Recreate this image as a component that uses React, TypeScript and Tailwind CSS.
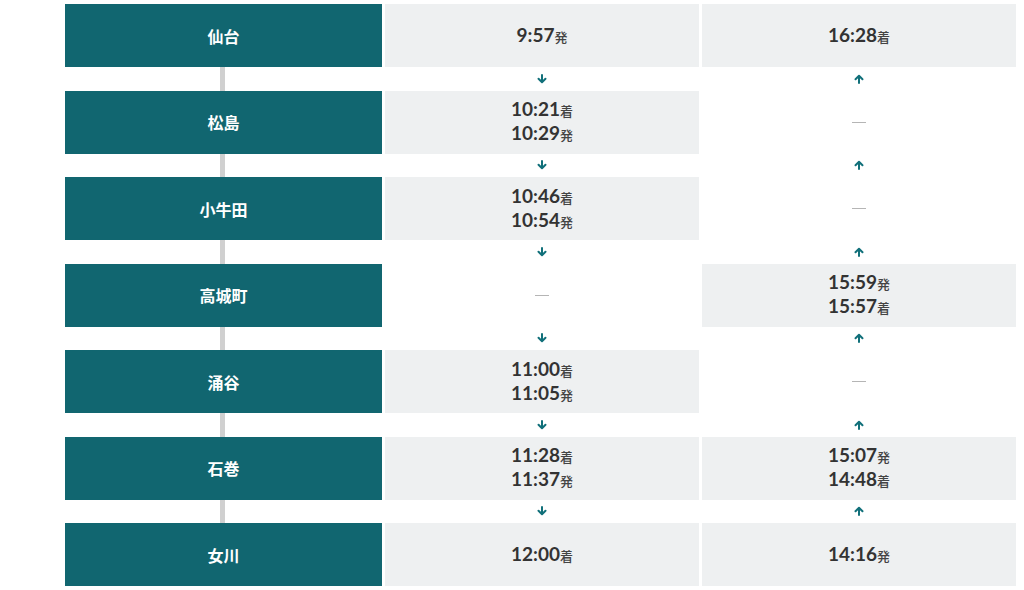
import React from 'react';

type Time = { t: string; k: string };

const stations: { name: string; down: Time[]; up: Time[] }[] = [
    { name: '仙台', down: [{ t: '9:57', k: '発' }], up: [{ t: '16:28', k: '着' }] },
    { name: '松島', down: [{ t: '10:21', k: '着' }, { t: '10:29', k: '発' }], up: [] },
    { name: '小牛田', down: [{ t: '10:46', k: '着' }, { t: '10:54', k: '発' }], up: [] },
    { name: '高城町', down: [], up: [{ t: '15:59', k: '発' }, { t: '15:57', k: '着' }] },
    { name: '涌谷', down: [{ t: '11:00', k: '着' }, { t: '11:05', k: '発' }], up: [] },
    { name: '石巻', down: [{ t: '11:28', k: '着' }, { t: '11:37', k: '発' }], up: [{ t: '15:07', k: '発' }, { t: '14:48', k: '着' }] },
    { name: '女川', down: [{ t: '12:00', k: '着' }], up: [{ t: '14:16', k: '発' }] },
];

const Arrow = ({ up }: { up?: boolean }) => (
    <svg width="10" height="10" viewBox="0 0 10 10" className={up ? 'rotate-180' : ''}>
        <path d="M5 1v7M1.5 4.8L5 8.3l3.5-3.5" fill="none" stroke="#11707a" strokeWidth="2" strokeLinecap="round" strokeLinejoin="round" />
    </svg>
);

const TimeCell = ({ times }: { times: Time[] }) => {
    if (times.length === 0) {
        return (
            <div className="flex items-center justify-center">
                <span className="block w-[14px] h-px bg-[#b5b5b5]"></span>
            </div>
        );
    }
    return (
        <div className="bg-[#eef0f1] flex flex-col items-center justify-center">
            {times.map((x, i) => (
                <div key={i} className="leading-[22px] text-[#333]">
                    <span className="text-[19px] font-bold font-['Lato',sans-serif]">{x.t}</span>
                    <span className="text-[13px] font-medium text-[#444] font-['Noto_Sans_CJK_JP',sans-serif]">{x.k}</span>
                </div>
            ))}
        </div>
    );
};

const App = () => {
    return (
        <div className="w-[1024px] h-[590px] bg-white pt-[4px] pl-[65px] overflow-hidden">
            <div className="w-[951px] flex flex-col">
                {stations.map((s, i) => (
                    <React.Fragment key={s.name}>
                        <div className="grid grid-cols-[317px_314px_314px] gap-x-[3px] h-[63px]">
                            <div className="bg-[#116670] flex items-center justify-center text-white text-[16px] font-bold font-['Noto_Sans_CJK_JP',sans-serif]">
                                {s.name}
                            </div>
                            <TimeCell times={s.down} />
                            <TimeCell times={s.up} />
                        </div>
                        {i < stations.length - 1 && (
                            <div className="grid grid-cols-[317px_314px_314px] gap-x-[3px] h-[23.5px]">
                                <div className="flex justify-center">
                                    <div className="w-[5px] h-full bg-[#d0d0d0] ml-[-2px]"></div>
                                </div>
                                <div className="flex items-center justify-center">
                                    <Arrow />
                                </div>
                                <div className="flex items-center justify-center">
                                    <Arrow up />
                                </div>
                            </div>
                        )}
                    </React.Fragment>
                ))}
            </div>
        </div>
    );
};

export default App;
